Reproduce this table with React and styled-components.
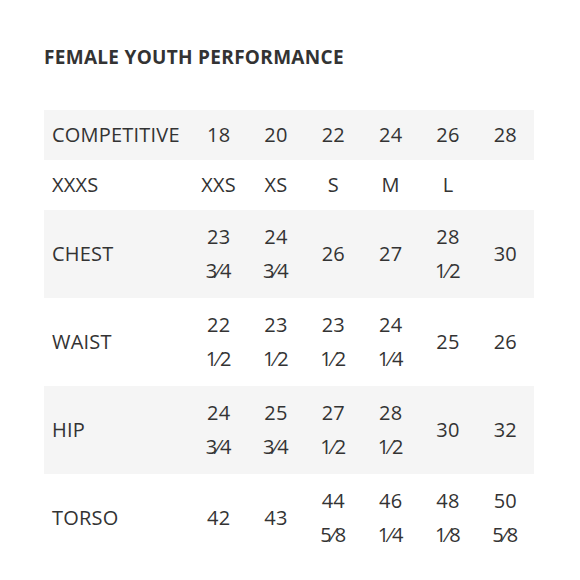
import React from 'react'
import styled, { createGlobalStyle } from 'styled-components'

const Global = createGlobalStyle`
  html, body { margin: 0; padding: 0; background: #ffffff; }
  body { font-family: "Open Sans", "Liberation Sans", sans-serif; color: #333333; }
`

const Page = styled.div`
  width: 580px;
  height: 580px;
  padding: 46px 46px 0 44px;
  box-sizing: border-box;
`

const Title = styled.h1`
  margin: 0 0 42px;
  font-size: 19px;
  font-weight: 700;
  line-height: 22px;
  color: #333333;
  letter-spacing: 0.3px;
`

const Table = styled.div`
  display: grid;
  grid-template-columns: 146px repeat(6, 1fr);
  width: 490px;
`

const Cell = styled.div`
  background: ${p => (p.$shade ? '#f5f5f5' : '#ffffff')};
  display: flex;
  flex-direction: column;
  justify-content: center;
  align-items: ${p => (p.$label ? 'flex-start' : 'center')};
  padding: ${p => (p.$tall ? '10px' : '8px')} 0 ${p => (p.$tall ? '10px' : '8px')} ${p => (p.$label ? '8px' : '0')};
  min-height: ${p => (p.$tall ? '68px' : '34px')};
  font-size: 20px;
  line-height: 34px;
  font-weight: 400;
  letter-spacing: 0.2px;
  color: #333333;
  white-space: nowrap;
  font-feature-settings: "frac" 0, "numr" 0, "dnom" 0;
`

const Line = styled.span`
  display: block;
`

const rows = [
  ['COMPETITIVE', ['18'], ['20'], ['22'], ['24'], ['26'], ['28']],
  ['XXXS', ['XXS'], ['XS'], ['S'], ['M'], ['L'], ['']],
  ['CHEST', ['23', '3⁄4'], ['24', '3⁄4'], ['26'], ['27'], ['28', '1⁄2'], ['30']],
  ['WAIST', ['22', '1⁄2'], ['23', '1⁄2'], ['23', '1⁄2'], ['24', '1⁄4'], ['25'], ['26']],
  ['HIP', ['24', '3⁄4'], ['25', '3⁄4'], ['27', '1⁄2'], ['28', '1⁄2'], ['30'], ['32']],
  ['TORSO', ['42'], ['43'], ['44', '5⁄8'], ['46', '1⁄4'], ['48', '1⁄8'], ['50', '5⁄8']],
]

export default function App() {
  return (
    <Page>
      <Global />
      <Title>FEMALE YOUTH PERFORMANCE</Title>
      <Table>
        {rows.map((row, i) => {
          const shade = i % 2 === 0
          const tall = row.slice(1).some(v => v.length > 1)
          return (
            <React.Fragment key={row[0]}>
              <Cell $label $shade={shade} $tall={tall}>{row[0]}</Cell>
              {row.slice(1).map((v, j) => (
                <Cell key={j} $shade={shade} $tall={tall}>
                  {v.map((part, k) => (
                    <Line key={k}>{part}</Line>
                  ))}
                </Cell>
              ))}
            </React.Fragment>
          )
        })}
      </Table>
    </Page>
  )
}
